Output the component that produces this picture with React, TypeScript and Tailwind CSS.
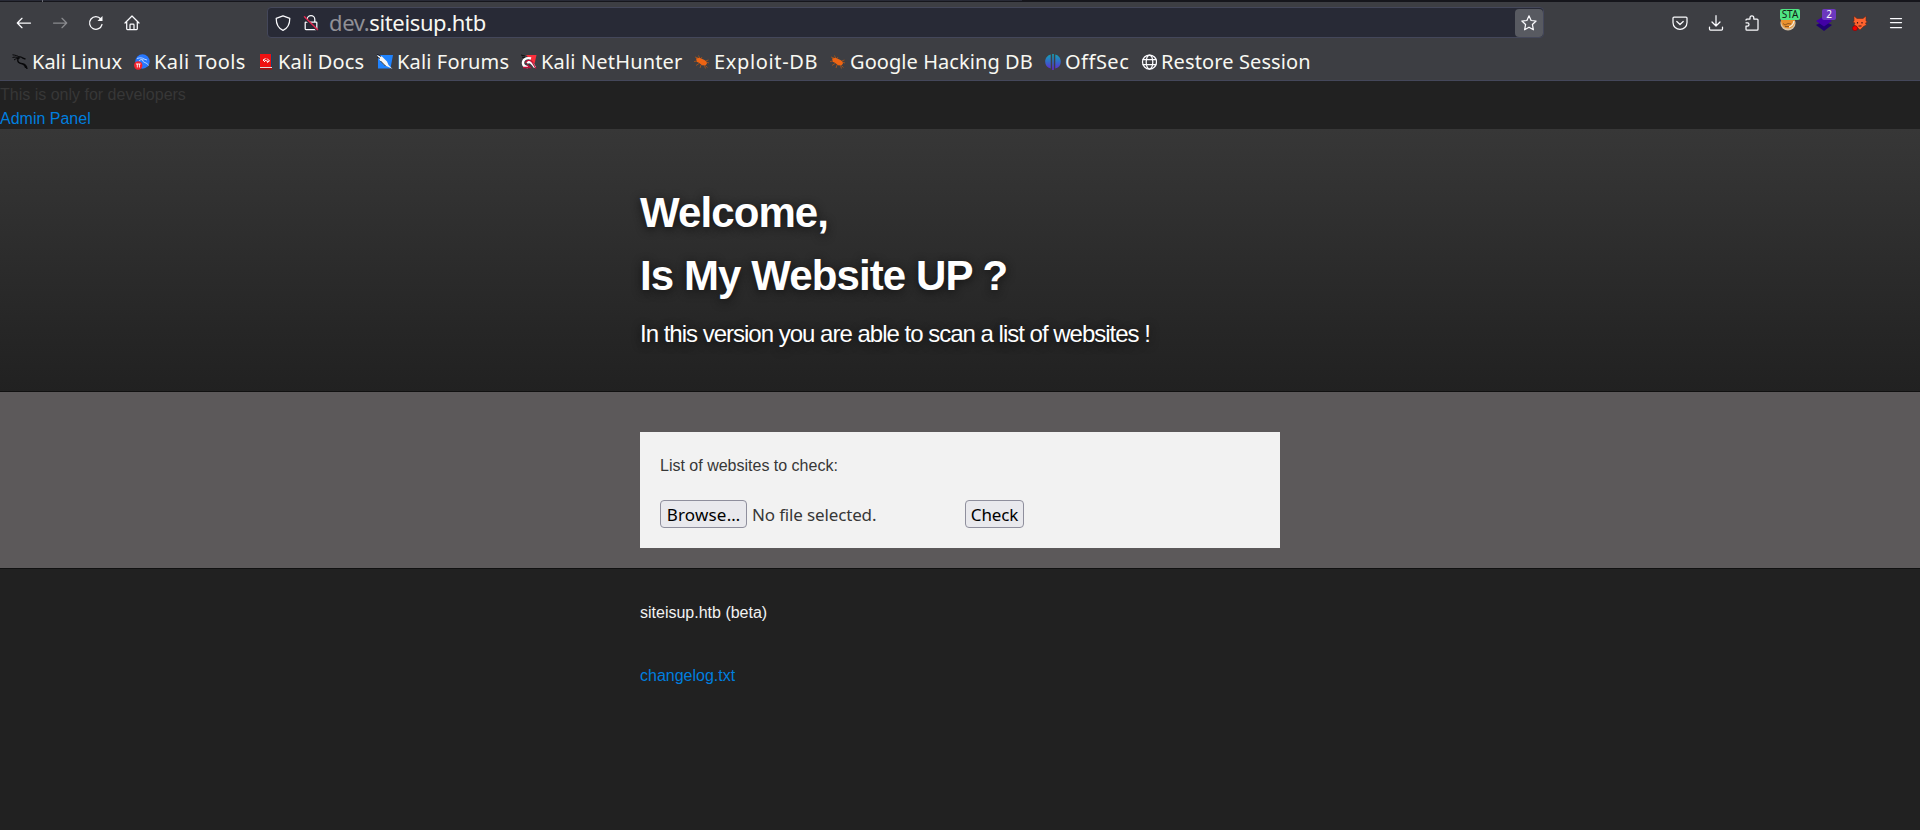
import type { ReactNode } from 'react';

type IconProps = { children: ReactNode; className?: string };

function Line({ children, className = '' }: IconProps) {
  return (
    <svg
      viewBox="0 0 16 16"
      className={`h-4 w-4 shrink-0 ${className}`}
      fill="none"
      stroke="#fbfbfe"
      strokeWidth="1.25"
      strokeLinecap="round"
      strokeLinejoin="round"
    >
      {children}
    </svg>
  );
}

function Color({ children }: IconProps) {
  return (
    <svg viewBox="0 0 16 16" className="h-4 w-4 shrink-0" fill="none">
      {children}
    </svg>
  );
}

function ToolButton({ children }: { children: ReactNode }) {
  return <button className="relative flex h-9 w-9 items-center justify-center">{children}</button>;
}

const Bug = () => (
  <Color>
    <path d="M1 3l3 1M4.500 1.500l1 2.500M8 3l-1 1.500M14.500 6l-3 1M15 9l-3-1M0 7.500l4-.5M2 11.500l3-2M6 14l1-3M11.500 14.500l-1-3M12 12l1.500 1.500" stroke="#a1541c" strokeWidth=".9" />
    <path d="M2 4.500l3.500-.8 5 2.300 1.800 1.500.7 2-1.500 2-3.500-.2-3.500-2.800-1.500-.5z" fill="#ee6413" />
  </Color>
);

const bookmarks = [
  {
    label: 'Kali Linux',
    box: 'w-[122px]',
    text: 'tracking-[0px]',
    icon: (
      <Color>
        <path d="M.5.8c3 .4 5.500 1 7 2.500M.5 3.500c2-.6 4-.5 6.500.3M2 6c2-1.500 3.500-1.700 5.500-1.500" stroke="#08080a" strokeWidth="1" />
        <path d="M7 3c2-.5 3 .2 4 1.200l2.500 1M6 4.500C5 8 7 9.300 10 9.700c3 .4 4.500 1.800 5 5.300M10 9.700c2.500 1 3.500 2.500 3.700 4.300" stroke="#08080a" strokeWidth="1.400" />
      </Color>
    ),
  },
  {
    label: 'Kali Tools',
    box: 'w-[124px]',
    text: 'tracking-[0.4px]',
    icon: (
      <Color>
        <circle cx="8.500" cy="7.500" r="7.200" fill="#2777ff" />
        <path d="M3 4.500c3-1 5.500-.8 7 .5l3 1M5 7c1-1.500 3-1.800 4.500-1M8.500 6c0 3 4.500 2 6 5.500" stroke="#b9d5ff" strokeWidth="1" />
        <circle cx="4.200" cy="11.500" r="4.200" fill="#f4222c" />
        <path d="M2 10h4.600M3.300 10v3.500M5.400 10v3.500" stroke="#fff" strokeWidth=".9" />
      </Color>
    ),
  },
  {
    label: 'Kali Docs',
    box: 'w-[119px]',
    text: 'tracking-[0.15px]',
    icon: (
      <Color>
        <path d="M2 0h11v13H2z" fill="#ef1111" />
        <path d="M13 0h1v13h-1z" fill="#17456b" />
        <path d="M2 13h12v1H2z" fill="#dedede" />
        <path d="M2 14h12v1.500H2z" fill="#ad0909" />
        <path d="M7.500 4.500L5 6l2 2M9 4.500l2.500 2.500L9 8.500M6.500 6l3.500 1.500" stroke="#fff" strokeWidth="1" />
      </Color>
    ),
  },
  {
    label: 'Kali Forums',
    box: 'w-[144px]',
    text: 'tracking-[0.15px]',
    icon: (
      <Color>
        <path d="M1 1h15l-2.500 13.500H1z" fill="#1f83ff" />
        <path d="M0 1l5 1.500 5 5 1.500 3.500 4 4-4-2L7 11 3 6.500z" fill="#f6f6f6" />
        <path d="M0 0l4 2.500M0 3l3 1.500M3.500 7l5 5" stroke="#121722" strokeWidth=".9" />
      </Color>
    ),
  },
  {
    label: 'Kali NetHunter',
    box: 'w-[173px]',
    text: 'tracking-[0.17px]',
    icon: (
      <Color>
        <path d="M5 1h10.500l-2 9z" fill="#fa303c" />
        <path d="M0 1l4 1M1 3l3 1" stroke="#111" strokeWidth="1" />
        <path d="M10 4.500C5 3 1.500 6 2 9.500s4 3.500 5 3.500M6 9c2-2.500 5-.5 8 4.500" stroke="#fff" strokeWidth="2.400" />
        <path d="M4.500 9c.8-3 4.500-3.500 6.500-1l4 6.500M2 13.500h7l-3-3" stroke="#c6113a" strokeWidth="1.300" />
      </Color>
    ),
  },
  { label: 'Exploit-DB', box: 'w-[136px]', text: 'tracking-[0.65px]', icon: <Bug /> },
  { label: 'Google Hacking DB', box: 'w-[215px]', text: 'tracking-[0.07px]', icon: <Bug /> },
  {
    label: 'OffSec',
    box: 'w-[96px]',
    text: 'tracking-[0.5px]',
    icon: (
      <Color>
        <defs>
          <linearGradient id="offsec" x1="0" y1="0" x2="0" y2="1">
            <stop offset="0" stopColor="#14a5b4" />
            <stop offset=".5" stopColor="#3268c8" />
            <stop offset="1" stopColor="#6724d4" />
          </linearGradient>
        </defs>
        <path d="M5.700.5v14C2 13.500.2 11 .2 7.800S2 1.500 5.700.5zM7.200 0h1.600v16H7.200zM10.300.5v14c3.800-1 5.500-3.500 5.500-6.700S14 1.500 10.300.5z" fill="url(#offsec)" />
      </Color>
    ),
  },
  {
    label: 'Restore Session',
    box: 'w-[190px]',
    text: 'tracking-[0.12px]',
    icon: (
      <Line>
        <circle cx="8.500" cy="8" r="7" />
        <ellipse cx="8.500" cy="8" rx="3.300" ry="7" />
        <path d="M2 5.500h13M2 10.500h13" />
      </Line>
    ),
  },
];

function BrowserChrome() {
  return (
    <header className="flex h-[81px] flex-col border-b border-[#44475a] bg-[#3d3e43] font-['Noto_Sans',sans-serif] text-[#f8f8f2]">
      <div className="flex h-[2px] w-full shrink-0 bg-[#16161c]">
        <div className="h-px w-[42px] bg-[#282a36]" />
        <div className="h-[2px] w-px bg-[#6d6e76]" />
        <div className="h-px w-[979px] bg-[#282a36]" />
      </div>
      <div className="flex h-[41px] shrink-0 items-center pl-1.5">
        <ToolButton>
          <Line><path d="M14.500 8H1.500M6 3.300L1.300 8 6 12.700" /></Line>
        </ToolButton>
        <ToolButton>
          <Line className="opacity-40"><path d="M1.500 8h13M10 3.300L14.700 8 10 12.700" /></Line>
        </ToolButton>
        <ToolButton>
          <Line>
            <path d="M14 9.500A6.300 6.300 0 1 1 12.800 4" />
            <path d="M14.500 1v5h-5z" fill="#fbfbfe" stroke="none" />
          </Line>
        </ToolButton>
        <ToolButton>
          <Line>
            <path d="M1 8l7-7 7 7M2.700 7v6.800c0 .5.300.8.800.8h9c.5 0 .8-.3.800-.8V7M6 14.500V10c0-.5.300-.8.800-.8h2.400c.5 0 .8.300.8.800v4.500" />
          </Line>
        </ToolButton>
        <div className="ml-[117px] flex h-[31px] w-[1277px] items-center rounded border border-[#44475a] bg-[#282a36] pl-[7px]">
          <Line className="mr-3"><path d="M8 .8l6.800 2.500c0 5.500-1.800 10-6.800 12C3 13.300 1.200 8.800 1.200 3.300z" /></Line>
          <Line>
            <path d="M4.200 7V4.500a3.800 3.800 0 0 1 7.600 0V7M3 7h10c.5 0 .8.300.8.800v6c0 .5-.3.800-.8.800H3c-.5 0-.8-.3-.8-.8v-6c0-.5.300-.8.800-.8z" />
            <path d="M.8 2.800l13 12" stroke="#282a36" strokeWidth="2" />
            <path d="M1.500 1.800l13 12.700" stroke="#e22850" strokeWidth="1.500" />
          </Line>
          <div className="ml-[10px] flex-1 whitespace-pre text-[22px] leading-[29px] tracking-[-0.36px]">
            <span className="text-[#909096]">dev.</span>
            <span>siteisup.htb</span>
          </div>
          <button className="flex h-[28px] w-[28px] items-center justify-center rounded bg-[#585a61]">
            <Line><path d="M8 .8l2.100 4.700 5 .5-3.700 3.500 1 5.300L8 12.200l-4.400 2.600 1-5.300L.9 6l5-.5z" /></Line>
          </button>
        </div>
        <div className="ml-[118px] flex">
          <ToolButton>
            <Line>
              <path d="M2 2h12c.6 0 1 .4 1 1v4.500c0 9-14 9-14 0V3c0-.6.4-1 1-1zM4.800 6.500L8 9.500l3.200-3" />
            </Line>
          </ToolButton>
          <ToolButton>
            <Line><path d="M8 .7v10M4 7l4 4 4-4M1.500 12v2c0 .5.400 1 1 1h11c.6 0 1-.5 1-1v-2" /></Line>
          </ToolButton>
          <ToolButton>
            <Line>
              <path d="M2 5c0-.5.400-.9.900-.9H6V2.800C6 .2 9.800.2 9.800 2.800v1.300h3.300c.5 0 .9.400.9.900v9.300c0 .5-.4.900-.9.900H2.900c-.5 0-.9-.4-.9-.9V11h1.500c2 0 2-3.200 0-3.200H2" />
            </Line>
          </ToolButton>
          <ToolButton>
            <Color>
              <circle cx="8" cy="8" r="7.600" fill="#d9c1a0" />
              <path d="M1 5h14c0 5-3 8.500-7 8.500S1 10 1 5z" fill="#e9902d" />
              <path d="M9 12c3-1 4.500-3 5-6" stroke="#f4ead8" strokeWidth="1.500" />
              <path d="M3 8.500l2 1.500 3-1.500 3 .5M5 11.500h4" stroke="#7c4a1c" strokeWidth=".8" />
            </Color>
            <span className="absolute left-[10px] top-[4px] h-[11px] w-5 rounded-[2px] bg-[#50e583] text-center text-[10px] leading-[10px] text-[#102016]">STA</span>
          </ToolButton>
          <ToolButton>
            <Color>
              <path d="M0 10l8-4 8 4-8 6z" fill="#200072" />
              <path d="M0 6l8-5 8 5-8 5.500z" fill="#4200a5" />
            </Color>
            <span className="absolute left-[16px] top-[4px] h-[11px] w-3.5 rounded-[2px] bg-[#6c38bd] text-center text-[10px] leading-[11px] text-white">2</span>
          </ToolButton>
          <ToolButton>
            <Color>
              <path d="M2 1l3 2.500h6L14 1v5l1.500 1-2 1 1 2-3 1.500L8 15l-3.500-3.500L2 10l1-2L.7 7 2 6z" fill="#ff632e" stroke="#642819" strokeWidth=".6" />
              <path d="M5.500 7v1.500M10 7v1.500M6.500 11h3" stroke="#451517" strokeWidth="1.200" />
              <circle cx="3" cy="13.200" r="2.500" fill="#f30000" stroke="#780000" strokeWidth=".5" />
            </Color>
          </ToolButton>
          <ToolButton>
            <Line><path d="M2.500 3.500h11M2.500 7.500h11M2.500 12.500h11" /></Line>
          </ToolButton>
        </div>
      </div>
      <nav className="flex h-[37px] items-center pl-3">
        {bookmarks.map((b) => (
          <a key={b.label} className={`flex shrink-0 items-center gap-1 ${b.box}`}>
            {b.icon}
            <span className={`whitespace-nowrap text-[20px] leading-[30px] ${b.text}`}>{b.label}</span>
          </a>
        ))}
      </nav>
    </header>
  );
}

export default function App() {
  return (
    <div className="flex h-[830px] w-[1920px] flex-col overflow-hidden bg-[#212121] font-['Liberation_Sans',Arial,sans-serif] text-base leading-6 text-[#373737]">
      <BrowserChrome />
      <div className="h-12 shrink-0 pt-0.5">
        <p>This is only for developers</p>
        <a className="block text-[#007edf]">Admin Panel</a>
      </div>
      <section className="h-[263px] shrink-0 border-b border-[#111111] bg-linear-to-b from-[#373737] to-[#212121] pt-[52px]">
        <div className="mx-auto w-[640px] text-white">
          <h1 className="text-[42px] font-bold leading-[63px] tracking-[-0.9px] [text-shadow:#111111_0px_2px_10px]">
            Welcome,
            <br />
            Is My Website UP ?
          </h1>
          <h2 className="mt-[9px] text-[24px] leading-[36px] tracking-[-1px] [text-shadow:#111111_0px_2px_10px]">
            In this version you are able to scan a list of websites !
          </h2>
        </div>
      </section>
      <main className="h-[177px] shrink-0 border-b border-[#111111] bg-[#5c595a] pt-10">
        <form className="mx-auto h-[116px] w-[640px] bg-[#f2f2f2] px-5 pt-[22px]">
          <label className="block">List of websites to check:</label>
          <div className="mt-[22px] flex h-7 items-center font-['Noto_Sans',sans-serif] text-[17px] leading-[24px]">
            <button type="button" className="h-7 w-[87px] whitespace-nowrap rounded border border-[#8f8f9d] bg-[#e9e9ed] pt-px tracking-[0.2px] text-black">Browse…</button>
            <span className="ml-[5px] w-[213px] whitespace-nowrap pt-px tracking-[-0.15px]">No file selected.</span>
            <button type="button" className="h-7 w-[59px] whitespace-nowrap rounded border border-[#8f8f9d] bg-[#e9e9ed] pt-px tracking-[-0.15px] text-black">Check</button>
          </div>
        </form>
      </main>
      <footer className="mx-auto w-[640px] pt-8">
        <p className="text-[#f2f2f2]">siteisup.htb (beta)</p>
        <a className="mt-[39px] block text-[#007edf]">changelog.txt</a>
      </footer>
    </div>
  );
}
